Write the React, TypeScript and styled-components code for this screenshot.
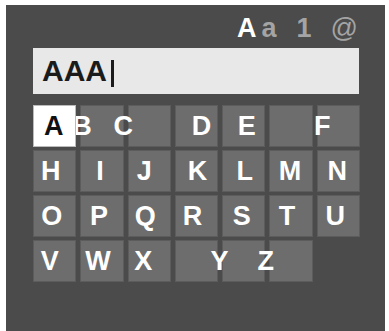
import React from 'react';
import styled, { createGlobalStyle } from 'styled-components';

const GlobalStyle = createGlobalStyle`
	html, body {
		margin: 0;
		padding: 0;
		background: #ffffff;
	}
	body {
		font-family: "Liberation Sans", Arial, sans-serif;
	}
`;

const Screen = styled.div`
	box-sizing: border-box;
	width: 379px;
	height: 326px;
	margin: 5px 4px 0 6px;
	padding: 8px 25px 0 27px;
	background: #4b4b4b;
	overflow: hidden;
`;

const ModeBar = styled.div`
	display: flex;
	justify-content: flex-end;
	align-items: baseline;
	height: 35px;
	line-height: 31px;
	padding-right: 2px;
	font-size: 27px;
`;

const Mode = styled.span<{ $active?: boolean; $gap: number; $bold?: boolean }>`
	margin-left: ${(p) => p.$gap}px;
	color: ${(p) => (p.$active ? '#ffffff' : '#a4a4a4')};
	font-weight: ${(p) => (p.$bold ? 700 : 400)};
`;

const Field = styled.div`
	box-sizing: border-box;
	height: 46px;
	width: 326px;
	padding-left: 9px;
	display: flex;
	align-items: center;
	background: #e8e8e8;
	color: #1b1b1b;
	font-size: 30px;
	font-weight: 700;
`;

const Caret = styled.span`
	display: inline-block;
	width: 3px;
	height: 27px;
	margin-left: 4px;
	background: #1b1b1b;
	transform: translateY(2px);
`;

const Keys = styled.div`
	margin-top: 11px;
	width: 327px;
	display: grid;
	grid-template-columns: repeat(7, 1fr);
	grid-auto-rows: 42px;
	gap: 3px 4px;
`;

const Key = styled.div<{ $selected?: boolean }>`
	display: flex;
	align-items: center;
	justify-content: center;
	background: ${(p) => (p.$selected ? '#ffffff' : '#6d6d6d')};
	color: ${(p) => (p.$selected ? '#111111' : '#ffffff')};
	box-shadow: inset 0 0 0 1px rgba(60, 60, 60, 0.35);
	font-size: 27px;
	font-weight: 700;
	${(p) => (p.$selected ? 'position: relative; z-index: 2;' : '')}
`;

const Glyph = styled.span<{ $dx: number }>`
	display: inline-block;
	transform: translateX(${(p) => p.$dx}px);
`;

type KeyDef = { ch: string; dx: number };

const rows: KeyDef[][] = [
	[
		{ ch: 'A', dx: -1 },
		{ ch: 'B', dx: -20 },
		{ ch: 'C', dx: -26 },
		{ ch: 'D', dx: 5 },
		{ ch: 'E', dx: 3 },
		{ ch: '', dx: 0 },
		{ ch: 'F', dx: -16 },
	],
	[
		{ ch: 'H', dx: -4 },
		{ ch: 'I', dx: -2 },
		{ ch: 'J', dx: -5 },
		{ ch: 'K', dx: 1 },
		{ ch: 'L', dx: 1 },
		{ ch: 'M', dx: -1 },
		{ ch: 'N', dx: -1 },
	],
	[
		{ ch: 'O', dx: -3 },
		{ ch: 'P', dx: -3 },
		{ ch: 'Q', dx: -4 },
		{ ch: 'R', dx: -4 },
		{ ch: 'S', dx: -2 },
		{ ch: 'T', dx: -4 },
		{ ch: 'U', dx: -3 },
	],
	[
		{ ch: 'V', dx: -5 },
		{ ch: 'W', dx: -4 },
		{ ch: 'X', dx: -6 },
		{ ch: 'Y', dx: 23 },
		{ ch: 'Z', dx: 22 },
		{ ch: '', dx: 0 },
	],
];

const App = () => {
	return (
		<>
			<GlobalStyle />
			<Screen>
				<ModeBar>
					<Mode $active $bold $gap={0}>A</Mode>
					<Mode $bold $gap={5}>a</Mode>
					<Mode $bold $gap={20}>1</Mode>
					<Mode $gap={19}>@</Mode>
				</ModeBar>
				<Field>
					AAA
					<Caret />
				</Field>
				<Keys>
					{rows.map((row, r) =>
						row.map((k, c) => (
							<Key key={`${r}-${c}`} $selected={r === 0 && c === 0}>
								{k.ch && <Glyph $dx={k.dx}>{k.ch}</Glyph>}
							</Key>
						))
					)}
				</Keys>
			</Screen>
		</>
	);
};

export default App;
